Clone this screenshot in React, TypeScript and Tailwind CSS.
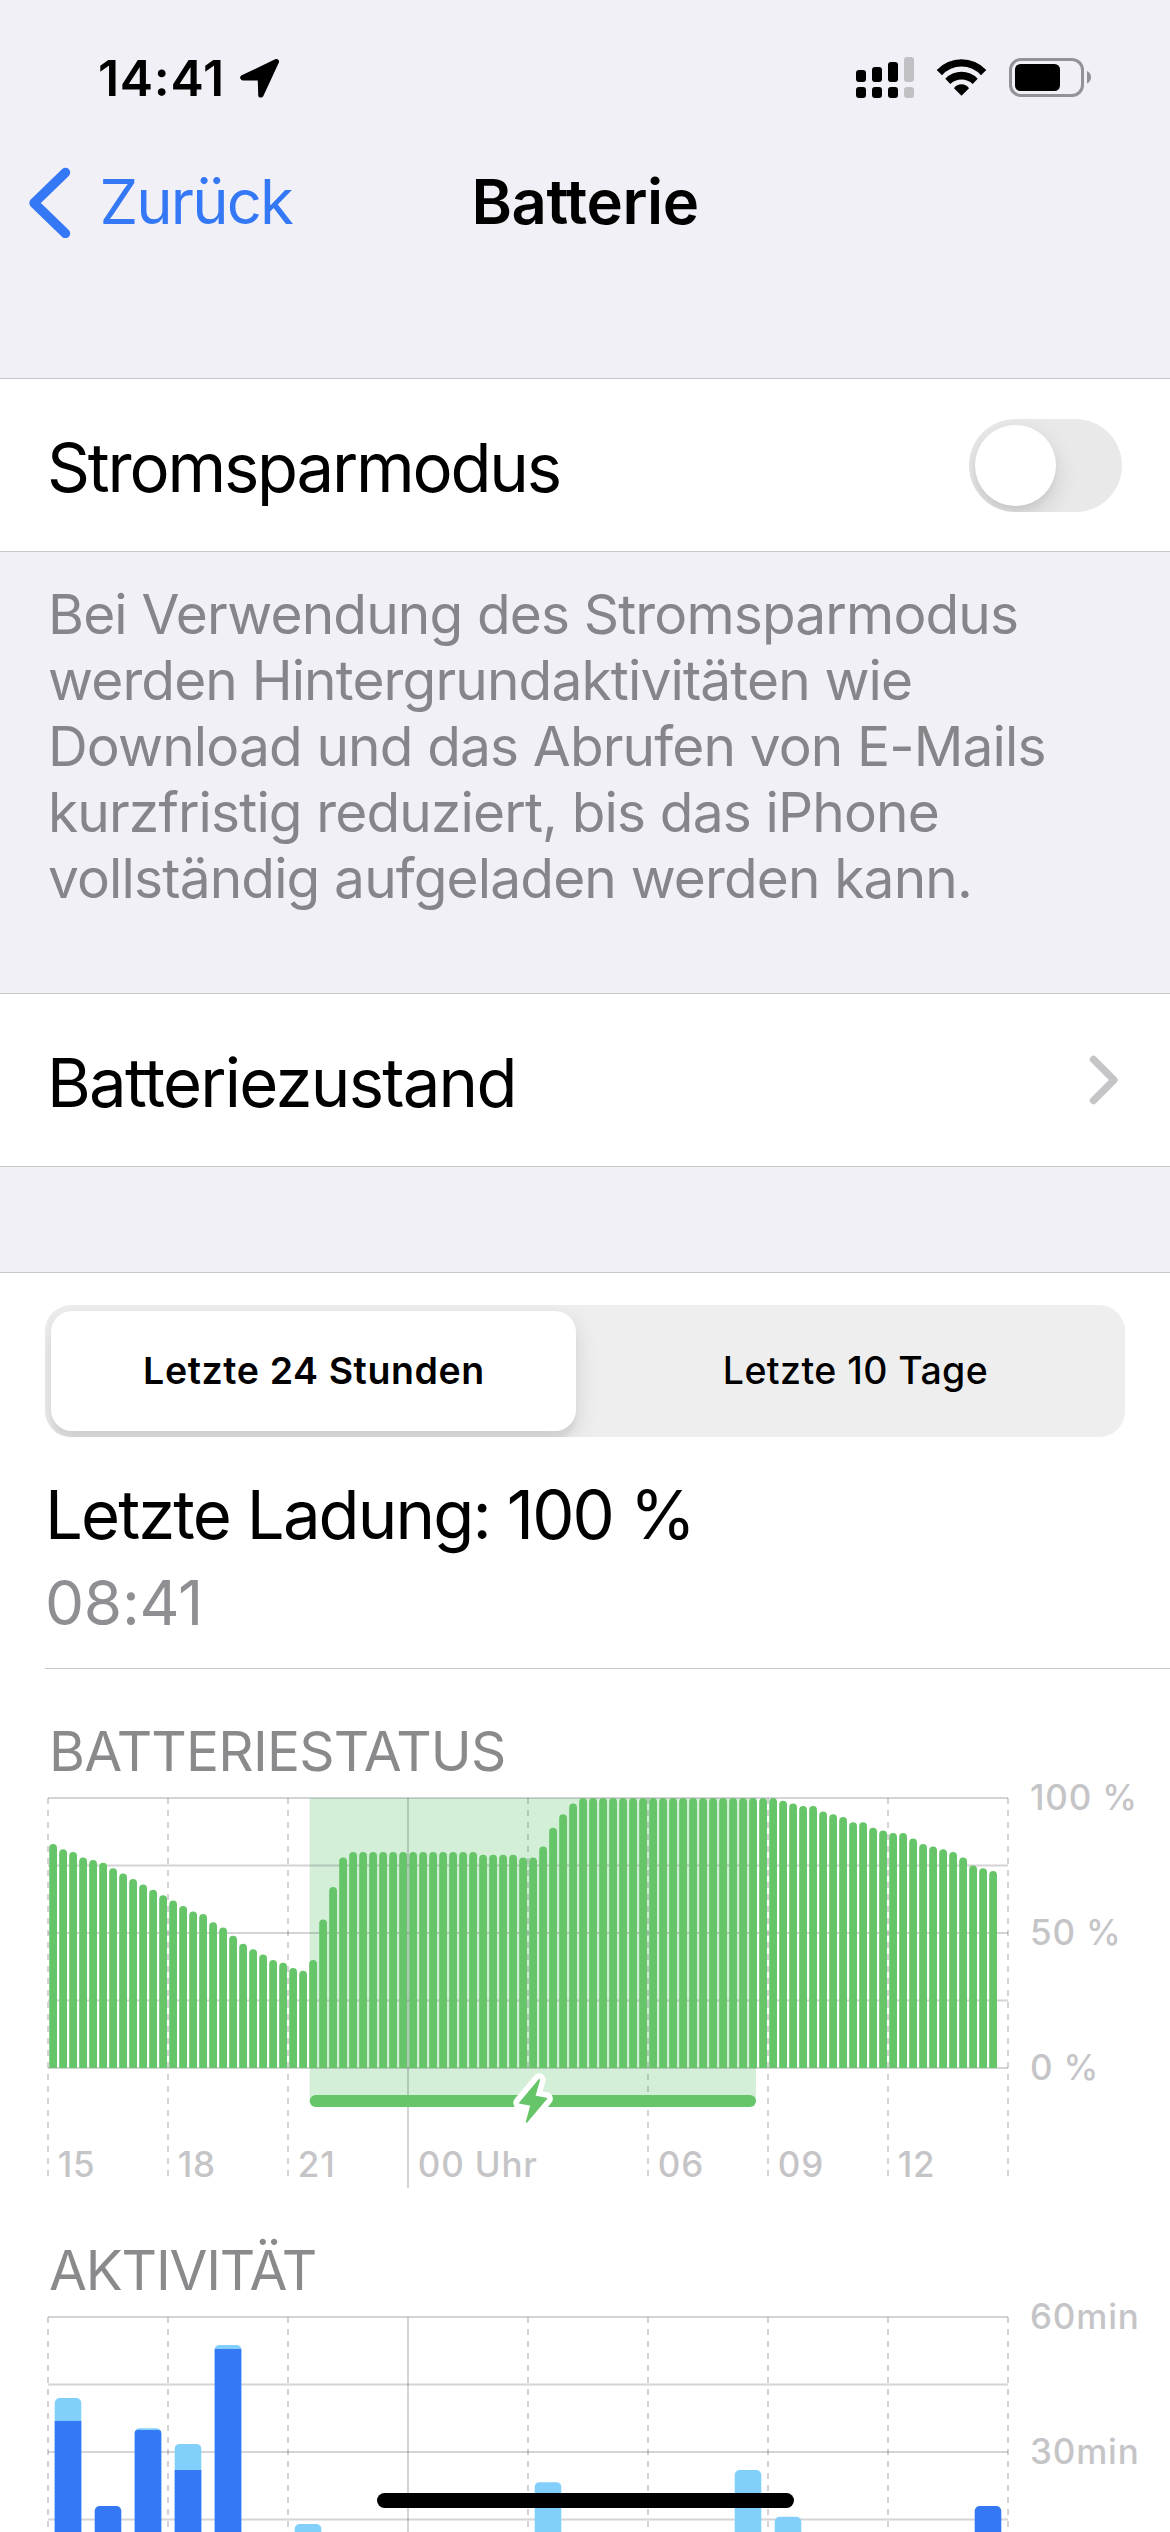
import { useState } from 'react'
import clsx from 'clsx'

const PLOT_WIDTH = 960
const PLOT_HEIGHT = 270
const GRID = 'rgba(60,60,67,0.22)'

// Ladestand in Prozent, ein Wert pro 15 Minuten ab 15 Uhr
const LEVELS = [
  83, 81, 80, 78, 77, 76, 74, 72, 70, 68, 66, 64, 62, 60, 58, 57, 54, 52, 49, 46, 44, 42, 40, 39, 37, 36, 40, 55, 67, 78,
  ...Array(13).fill(80),
  79, 79, 79, 79, 78, 78, 82, 89, 94, 98,
  ...Array(20).fill(100),
  99, 98, 97, 97, 95, 94, 93, 91, 91, 89, 88, 87, 87, 85, 83, 82, 81, 80, 78, 75, 74, 73,
]

// Minuten pro Stunde: gesamt und davon mit eingeschaltetem Bildschirm
const ACTIVITY = [
  { hour: 0, total: 42, screen: 36.9 },
  { hour: 1, total: 18, screen: 18 },
  { hour: 2, total: 35.3, screen: 34.9 },
  { hour: 3, total: 31.8, screen: 26 },
  { hour: 4, total: 53.8, screen: 52.9 },
  { hour: 6, total: 14, screen: 0 },
  { hour: 12, total: 23.3, screen: 0 },
  { hour: 17, total: 26, screen: 0 },
  { hour: 18, total: 15.6, screen: 0 },
  { hour: 23, total: 18, screen: 18 },
]

const HOURS = ['15', '18', '21', '00 Uhr', '', '06', '09', '12', '']

function Grid({ labels }: { labels: string[] }) {
  return (
    <g stroke={GRID} strokeWidth="2">
      {[0, 1, 2, 3, 4].map((i) => (
        <line key={i} x1="0" x2={PLOT_WIDTH} y1={i * 67.5} y2={i * 67.5} />
      ))}
      {labels.map((label, i) => {
        const midnight = i === 3
        const bottom = midnight ? 390 : i === 4 ? PLOT_HEIGHT : 384
        return <line key={i} x1={i * 120} x2={i * 120} y1="0" y2={bottom} strokeDasharray={midnight ? undefined : '6 6'} />
      })}
    </g>
  )
}

function AxisText({ x, y, children }: { x: number; y: number; children: React.ReactNode }) {
  return (
    <text x={x} y={y} className="fill-[#c5c5c7] text-[35px] font-medium tracking-[0.8px]">
      {children}
    </text>
  )
}

function BatteryChart() {
  const bolt = 'M491.3 281.8 L471.8 305 L483.2 307 L478.6 324 L498.4 300.6 L486.6 298.4 Z'

  return (
    <svg className="block h-[453px] w-full shrink-0 overflow-visible" viewBox="0 0 1170 453">
      <g transform="translate(48 14)">
        <path d="M261.7 0 H708 V303 H261.7 Z" fill="#d3efd8" />
        <Grid labels={HOURS} />
        {LEVELS.map((level, i) => {
          const x = 1.2 + i * 10
          const top = PLOT_HEIGHT - level * 2.7
          return (
            <path
              key={i}
              d={`M${x} ${PLOT_HEIGHT} V${top + 3.9} a3.9 3.9 0 0 1 7.8 0 V${PLOT_HEIGHT} Z`}
              fill="#66c568"
            />
          )
        })}
        <rect x="261.7" y="297" width="446.3" height="12" rx="6" fill="#66c568" />
        <path d={bolt} fill="white" stroke="white" strokeWidth="13" strokeLinejoin="round" />
        <path d={bolt} fill="#66c568" stroke="#66c568" strokeWidth="1.6" strokeLinejoin="round" />
        {HOURS.map((label, i) => label && <AxisText key={i} x={i * 120 + 9.8} y={379}>{label}</AxisText>)}
        <AxisText x={982} y={12}>100 %</AxisText>
        <AxisText x={982} y={147}>50 %</AxisText>
        <AxisText x={982} y={282}>0 %</AxisText>
      </g>
    </svg>
  )
}

function ActivityChart() {
  return (
    <svg className="block h-[453px] w-full shrink-0 overflow-visible" viewBox="0 0 1170 453">
      <g transform="translate(48 14)">
        <Grid labels={HOURS} />
        {ACTIVITY.map(({ hour, total, screen }) => {
          const x = hour * 40 + 6.7
          const top = PLOT_HEIGHT - total * 4.5
          const screenTop = PLOT_HEIGHT - screen * 4.5
          const w = 26.6
          const rounded = `M${x} ${PLOT_HEIGHT} V${top + 5} a5 5 0 0 1 5 -5 h${w - 10} a5 5 0 0 1 5 5 V${PLOT_HEIGHT} Z`
          return (
            <g key={hour}>
              <path d={rounded} fill={screen === total ? '#3478f6' : '#83cffb'} />
              {screen > 0 && screen < total && (
                <rect x={x} y={screenTop} width={w} height={PLOT_HEIGHT - screenTop} rx={total - screen < 0.5 ? 3 : 0} fill="#3478f6" />
              )}
            </g>
          )
        })}
        <AxisText x={982} y={12}>60min</AxisText>
        <AxisText x={982} y={147}>30min</AxisText>
      </g>
    </svg>
  )
}

function StatusBar() {
  return (
    <div className="flex h-[140px] shrink-0 items-start justify-between pt-[48px] pr-[78px] pl-[98px]">
      <div className="flex items-start gap-[15px]">
        <span className="text-[50px] leading-[60px] font-semibold tracking-[0.7px]">14:41</span>
        <svg className="mt-[11px] h-[39px] w-[39px]" viewBox="0 0 39 39">
          <path
            d="M36.3 2.7 L2.9 18.7 L20.4 18.7 L20.9 35.9 Z"
            fill="black"
            stroke="black"
            strokeWidth="5.4"
            strokeLinejoin="round"
          />
        </svg>
      </div>
      <div className="flex items-start">
        <svg className="mt-[9px] mr-[22px] h-[41px] w-[58px]" viewBox="0 0 58 41">
          <rect x="0" y="13" width="10" height="12" rx="3" />
          <rect x="16" y="10" width="10" height="15" rx="3" />
          <rect x="32" y="5" width="10" height="20" rx="3" />
          <rect x="48" y="0" width="10" height="25" rx="3" fill="#c1c0c5" />
          <rect x="0" y="30" width="10" height="11" rx="3" />
          <rect x="16" y="30" width="10" height="11" rx="3" />
          <rect x="32" y="30" width="10" height="11" rx="3" />
          <rect x="48" y="30" width="10" height="11" rx="3" fill="#c1c0c5" />
        </svg>
        <svg className="mt-[11px] mr-[22px] h-[37px] w-[51px]" viewBox="0 0 51 37">
          <path d="M.7 11 A34 34 0 0 1 50.3 11 L45 16.3 A26 26 0 0 0 6 16.3 Z" />
          <path d="M9.3 19.7 A22.5 22.5 0 0 1 41.7 19.7 L36.7 25 A16 16 0 0 0 14.3 25 Z" />
          <path d="M18 29.3 A9 9 0 0 1 33 29.3 L25.5 36.8 Z" />
        </svg>
        <svg className="mt-[10px] h-[39px] w-[83px]" viewBox="0 0 83 39">
          <rect x="1.5" y="1.5" width="72" height="36" rx="10.5" fill="none" stroke="#939297" strokeWidth="3" />
          <rect x="6" y="6" width="45" height="27" rx="5.5" />
          <path d="M78 13 C83.3 15.2 83.3 23.3 78 25.5 Z" fill="#939297" />
        </svg>
      </div>
    </div>
  )
}

function Toggle({ checked, onChange }: { checked: boolean; onChange: (checked: boolean) => void }) {
  return (
    <button
      type="button"
      role="switch"
      aria-checked={checked}
      onClick={() => onChange(!checked)}
      className={clsx('flex h-[93px] w-[153px] overflow-hidden rounded-full p-[6px]', checked ? 'justify-end bg-[#66c568]' : 'bg-[#e9e9ea]')}
    >
      <span className="h-[81px] w-[81px] rounded-full bg-white shadow-[0_9px_24px_rgba(0,0,0,0.13),0_6px_6px_rgba(0,0,0,0.04)]" />
    </button>
  )
}

export default function App() {
  const [lowPower, setLowPower] = useState(false)
  const [range, setRange] = useState<'24h' | '10d'>('24h')

  return (
    <div className="relative flex h-[2532px] w-[1170px] flex-col overflow-hidden bg-[#f1f0f6] font-['Inter','Liberation_Sans',sans-serif] text-black">
      <StatusBar />

      <nav className="grid h-[238px] shrink-0 grid-cols-3 items-start pt-[26px]">
        <button type="button" className="flex items-center pl-[28px] text-[#3478f6]">
          <svg className="h-[72px] w-[44px]" viewBox="0 0 44 72" fill="none">
            <path d="M37.5 6.5 L6 37 L37.5 67.5" stroke="currentColor" strokeWidth="9.4" strokeLinecap="round" strokeLinejoin="round" />
          </svg>
          <span className="ml-[27.5px] text-[61.5px] leading-[72px] tracking-[-1.84px]">Zurück</span>
        </button>
        <h1 className="text-center text-[61.5px] leading-[72px] font-semibold tracking-[-0.42px]">Batterie</h1>
      </nav>

      <div className="flex h-[174px] shrink-0 items-center justify-between border-y border-[#c6c6c8] bg-white pr-[48px] pl-[47px]">
        <span className="pt-[5px] text-[67px] leading-[80px] tracking-[-2.2px]">Stromsparmodus</span>
        <Toggle checked={lowPower} onChange={setLowPower} />
      </div>

      <div className="h-[441px] shrink-0 pt-[29px] pl-[48px] text-[55px] leading-[66px] tracking-[-0.85px] text-[#85858a]">
        Bei Verwendung des Stromsparmodus
        <br />
        werden Hintergrundaktivitäten wie
        <br />
        Download und das Abrufen von E-Mails
        <br />
        kurzfristig reduziert, bis das iPhone
        <br />
        vollständig aufgeladen werden kann.
      </div>

      <button
        type="button"
        className="flex h-[174px] w-full shrink-0 items-center justify-between border-y border-[#c6c6c8] bg-white pr-[50px] pl-[47px]"
      >
        <span className="pt-[5px] text-[67px] leading-[80px] tracking-[-1.76px]">Batteriezustand</span>
        <svg className="h-[50px] w-[32px]" viewBox="0 0 32 50" fill="none">
          <path d="M5.5 4.5 L26 25 L5.5 45.5" stroke="#c5c5c7" strokeWidth="7.4" strokeLinecap="round" strokeLinejoin="round" />
        </svg>
      </button>

      <section className="mt-[105px] flex shrink-0 flex-col border-t border-[#c6c6c8] bg-white pt-[32px]">
        <div className="mr-[45px] ml-[45px] grid h-[132px] grid-cols-[525px_1fr] overflow-hidden rounded-[26px] bg-[#eeeeee] p-[6px] text-[37.5px]">
          <button
            type="button"
            onClick={() => setRange('24h')}
            className={clsx(
              'rounded-[21px] pl-[1px] font-semibold tracking-[0.6px]',
              range === '24h' && 'bg-white shadow-[0_9px_24px_rgba(0,0,0,0.12),0_9px_3px_rgba(0,0,0,0.04)]',
            )}
          >
            Letzte 24 Stunden
          </button>
          <button
            type="button"
            onClick={() => setRange('10d')}
            className={clsx(
              'rounded-[21px] pl-[16px] font-medium tracking-[0.43px]',
              range === '10d' && 'bg-white shadow-[0_9px_24px_rgba(0,0,0,0.12),0_9px_3px_rgba(0,0,0,0.04)]',
            )}
          >
            Letzte 10 Tage
          </button>
        </div>

        <div className="ml-[45px] h-[232px] border-b border-[#c6c6c8] pt-[38px]">
          <p className="text-[67px] leading-[80px] tracking-[-1.88px]">Letzte Ladung: 100 %</p>
          <p className="mt-[12px] text-[62px] leading-[72px] tracking-[-0.29px] text-[#8e8e93]">08:41</p>
        </div>

        <h2 className="mt-[49px] pl-[49px] text-[55px] leading-[66px] tracking-[-0.8px] text-[#8a8a8d]">BATTERIESTATUS</h2>
        <BatteryChart />
        <h2 className="pl-[49px] text-[55px] leading-[66px] tracking-[-1.17px] text-[#8a8a8d]">AKTIVITÄT</h2>
        <ActivityChart />
      </section>

      {/* Home-Indikator */}
      <div className="absolute bottom-[24px] left-[377px] h-[15px] w-[417px] rounded-full bg-black" />
    </div>
  )
}
